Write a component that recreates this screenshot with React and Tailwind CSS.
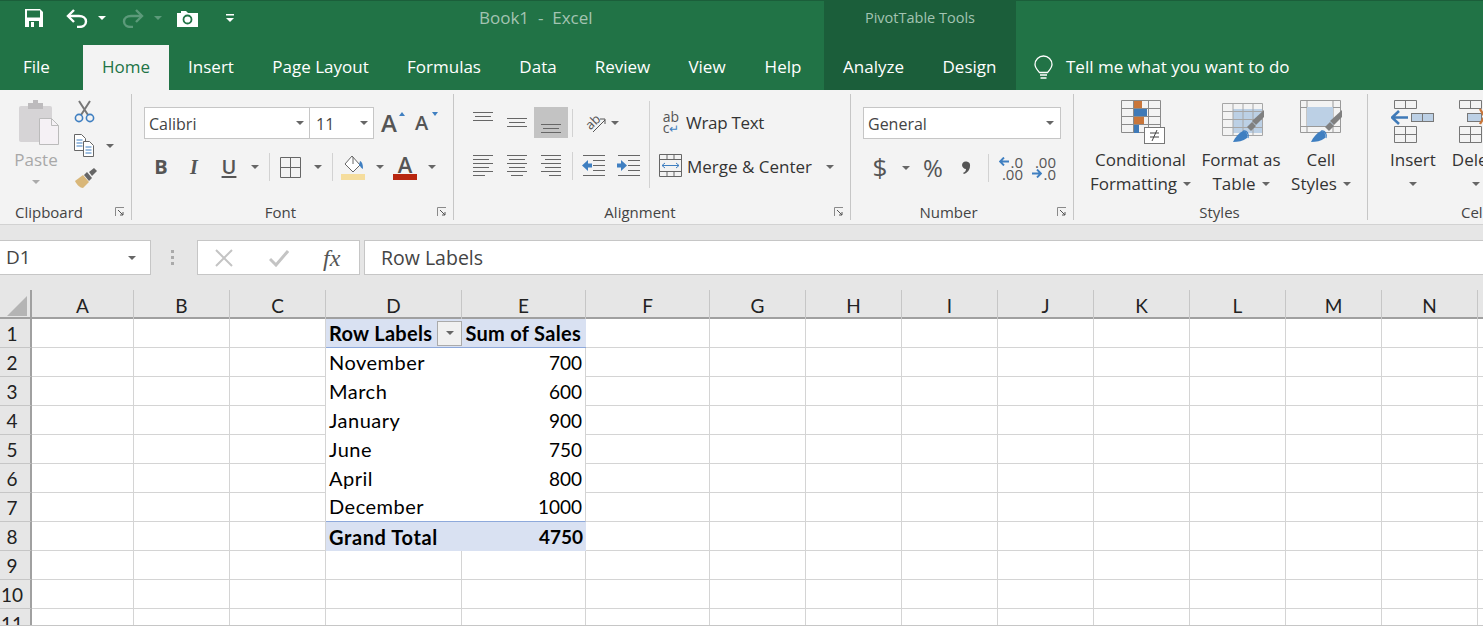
import React from 'react';

const ui = "font-['Open_Sans',sans-serif]";

const Caret = ({ className = '', color = '#666' }) => (
  <svg width="8" height="4" viewBox="0 0 8 4" className={className}>
    <path d="M0 0h8L4 4z" fill={color} />
  </svg>
);

const Sep = ({ className = '' }) => <div className={`w-px bg-[#d2d2d2] ${className}`} />;

const Launcher = () => (
  <svg width="10" height="10" viewBox="0 0 10 10">
    <path d="M.5 9V.5H9" fill="none" stroke="#8a8a8a" />
    <path d="M3 3l5 5M8 5v3H5" fill="none" stroke="#555" />
  </svg>
);

const Lines = ({ rows }) => (
  <svg width="20" height="22" viewBox="0 0 20 22">
    {rows.map(([x, y, w], i) => (
      <rect key={i} x={x} y={y} width={w} height="1" fill="#666" />
    ))}
  </svg>
);

const SaveIcon = () => (
  <svg width="20" height="20" viewBox="0 0 20 20">
    <path d="M1 1h15l3 3v15H1z" fill="#fff" />
    <rect x="3" y="2.500" width="13" height="7" fill="#217346" />
    <rect x="5" y="13" width="10" height="6" fill="#217346" />
    <rect x="7" y="14" width="3" height="5" fill="#fff" />
  </svg>
);

const UndoIcon = ({ color, flip }) => (
  <svg width="22" height="20" viewBox="0 0 22 20" style={flip ? { transform: 'scaleX(-1)' } : undefined}>
    <path d="M8 2L2 8l6 6" fill="none" stroke={color} strokeWidth="2.400" />
    <path d="M2 8h11c4 0 7 2 7 5.500S17 19 13 19h-2" fill="none" stroke={color} strokeWidth="2.400" />
  </svg>
);

const CameraIcon = () => (
  <svg width="23" height="17" viewBox="0 0 23 17">
    <path d="M1 3h4V1h5l2 2h10v14H1z" fill="#fff" />
    <circle cx="11.500" cy="9.500" r="4" fill="none" stroke="#217346" strokeWidth="1.800" />
  </svg>
);

const QuickAccess = () => (
  <svg width="8" height="9" viewBox="0 0 8 9">
    <rect y="0" width="8" height="1.500" fill="#fff" />
    <path d="M0 4h8L4 8z" fill="#fff" />
  </svg>
);

const Bulb = () => (
  <svg width="19" height="24" viewBox="0 0 19 24" fill="none" stroke="#fff" strokeWidth="1.300">
    <path d="M5.500 17.500C3 14.500 1 12.500 1 9.500a8.500 8.500 0 0 1 17 0c0 3-2 5-4.500 8z" />
    <path d="M6 20h7M6.500 23h6" />
  </svg>
);

const PasteIcon = () => (
  <svg width="42" height="46" viewBox="0 0 42 46">
    <rect x="1" y="6" width="33" height="36" rx="2" fill="#d6d4d6" />
    <rect x="10" y="3" width="15" height="6" fill="#bdbbbd" />
    <rect x="15" y="0" width="5" height="4" fill="#bdbbbd" />
    <path d="M21.500 18.500h12l7 7v19h-19z" fill="#f5f1f5" stroke="#bbb" />
    <path d="M33.500 18.500v7h7" fill="none" stroke="#bbb" />
  </svg>
);

const ScissorsIcon = () => (
  <svg width="21" height="23" viewBox="0 0 21 23">
    <path d="M5 1l9 14M16 1L7 15" stroke="#777" strokeWidth="2" fill="none" />
    <circle cx="5" cy="18" r="3.600" fill="none" stroke="#3f7fc1" strokeWidth="1.600" />
    <circle cx="16" cy="18" r="3.600" fill="none" stroke="#3f7fc1" strokeWidth="1.600" />
  </svg>
);

const CopyIcon = () => (
  <svg width="21" height="23" viewBox="0 0 21 23">
    <path d="M.5.500h7l4 4v12H.5z" fill="#fff" stroke="#666" />
    <path d="M2.500 6h6M2.500 9h6M2.500 12h6" stroke="#3f7fc1" />
    <path d="M9.500 7.500h6l4 4v11h-10z" fill="#fff" stroke="#666" />
    <path d="M11.500 13h6M11.500 16h6M11.500 19h6" stroke="#3f7fc1" />
  </svg>
);

const PainterIcon = () => (
  <svg width="24" height="21" viewBox="0 0 24 21">
    <path d="M1 13l8-6 6 7-6 6c-3 0-6-3-8-7z" fill="#d9b779" />
    <path d="M10 7l3-3 5 6-3 3z" fill="#666" />
    <path d="M15 4l5-4 3 3-5 5z" fill="#666" />
  </svg>
);

const BorderIcon = () => (
  <svg width="21" height="21" viewBox="0 0 21 21">
    <path d="M.5.500h20v20H.5zM10.500.500v20M.500 10.500h20" fill="none" stroke="#666" />
  </svg>
);

const FillIcon = () => (
  <svg width="24" height="25" viewBox="0 0 24 25">
    <path d="M11 1l8 9-7 7-8-8z" fill="#fff" stroke="#666" />
    <path d="M12 2v7" stroke="#666" />
    <path d="M19 6c3 1 3 6 3 8-2-1-2-2-4-4z" fill="#3f7fc1" />
    <rect y="19" width="24" height="6" fill="#f5dd9d" />
  </svg>
);

const OrientIcon = () => (
  <svg width="21" height="20" viewBox="0 0 21 20">
    <text x="0" y="14" fontSize="13" fontFamily="'Open Sans',sans-serif" fill="#555" transform="rotate(-45 7 9)">ab</text>
    <path d="M8 19L20 7M15 6h5v5" fill="none" stroke="#555" />
  </svg>
);

const IndentIcon = ({ right }) => (
  <svg width="23" height="21" viewBox="0 0 23 21">
    <path d="M1 .5h22M1 20.500h22M11 5.500h12M11 10.500h12M11 15.500h12" stroke="#666" />
    {right
      ? <path d="M0 8.500h4V5l6 5.500L4 16v-3.500H0z" fill="#3f7fc1" />
      : <path d="M10 8.500H6V5L0 10.500 6 16v-3.500h4z" fill="#3f7fc1" />}
  </svg>
);

const MergeIcon = () => (
  <svg width="23" height="23" viewBox="0 0 23 23">
    <path d="M.5.500h22v22H.5zM.500 5.500h22M.500 17.500h22M8 .500v5M15 .500v5M8 17.500v5M15 17.500v5" fill="none" stroke="#666" />
    <path d="M3 11.500h17M6 9l-3 2.500L6 14M17 9l3 2.500-3 2.500" fill="none" stroke="#3f7fc1" />
  </svg>
);

const SmallArrow = ({ right }) => (
  <svg width="10" height="9" viewBox="0 0 10 9" style={right ? { transform: 'scaleX(-1)' } : undefined}>
    <path d="M5 .5L1 4.500l4 4M1.500 4.500H10" fill="none" stroke="#3f7fc1" strokeWidth="1.900" />
  </svg>
);

const DecimalIcon = ({ more }) => (
  <div className="flex flex-col items-end text-[15px] leading-[12px] text-[#555]">
    {more ? (
      <>
        <div className="flex items-center gap-[1px]"><SmallArrow />.0</div>
        <div>.00</div>
      </>
    ) : (
      <>
        <div>.00</div>
        <div className="flex items-center gap-[1px]"><SmallArrow right />.0</div>
      </>
    )}
  </div>
);

const CommaIcon = () => (
  <svg width="10" height="14" viewBox="0 0 10 14">
    <path d="M1 4a4 4 0 1 1 8 1c0 4-3 7-6 8l-1-1c2-1 3-2 3-4-2 0-4-2-4-4z" fill="#555" />
  </svg>
);

const Brush = () => (
  <>
    <path d="M42 10v7L34 25l-4-4z" fill="#808080" />
    <path d="M30 22l-5 5 4 4 5-5z" fill="#808080" />
    <path d="M11 42c2-5 6-9 10-11 4 0 5 4 4 7-4 3-9 4-14 4z" fill="#3f7fc1" />
    <path d="M21 31c4-1 6 3 5 7" fill="none" stroke="#3f7fc1" strokeWidth="1.200" />
  </>
);

const CondIcon = () => (
  <svg width="44" height="44" viewBox="0 0 44 44">
    <path d="M.5.500h39v32H.5zM12.500.500v32M27.500.500v32M.500 8.500h39M.500 16.500h39M.500 24.500h39" fill="none" stroke="#8a8a8a" />
    <rect x="13" y="1" width="8" height="7" fill="#c9763a" />
    <rect x="13" y="9" width="13" height="7" fill="#3f7ab8" />
    <rect x="13" y="17" width="10" height="7" fill="#c9763a" />
    <rect x="13" y="25" width="5" height="8" fill="#3f7ab8" />
    <rect x="23.500" y="27.500" width="20" height="16" fill="#fff" stroke="#777" />
    <path d="M29 33h9M29 37h9M36 30l-5 11" stroke="#444" fill="none" />
  </svg>
);

const TableStyleIcon = () => (
  <svg width="44" height="46" viewBox="0 0 44 46">
    <rect x="11" y="9" width="29" height="24" fill="#bcd0e5" />
    <path d="M.5 3.500h40v32H.5zM.500 11.500h40M.500 19.500h40M.500 27.500h40M11 3.500v32M21 3.500v32M31 3.500v32" fill="none" stroke="#a6a6a6" />
    <Brush />
  </svg>
);

const CellStyleIcon = () => (
  <svg width="44" height="46" viewBox="0 0 44 46">
    <path d="M.5.500h40v32H.5zM.500 7.500h40M.500 26.500h40M7 .500v32M33 .500v32" fill="none" stroke="#999" />
    <rect x="7" y="7" width="26" height="19" fill="#bcd0e5" />
    <Brush />
  </svg>
);

const InsertIcon = () => (
  <svg width="44" height="44" viewBox="0 0 44 44">
    <path d="M3.500.500h22v8h-22zM14.500.500v8M3.500 26.500h22v16h-22zM3.500 34.500h22M14.500 26.500v16" fill="none" stroke="#777" />
    <rect x="20.500" y="13.500" width="22" height="8" fill="#bcd0e5" stroke="#777" />
    <path d="M31.500 13.500v8" stroke="#777" />
    <path d="M8 11l-7 6.500L8 24M1 17.500h16" fill="none" stroke="#3f7ab8" strokeWidth="2.600" />
  </svg>
);

const DeleteIcon = () => (
  <svg width="30" height="44" viewBox="0 0 30 44">
    <path d="M.5.500h22v8H.5zM11.500.500v8M.500 26.500h22v16H.5zM.500 34.500h22M11.500 26.500v16" fill="none" stroke="#777" />
    <rect x="8.500" y="13.500" width="14" height="8" fill="#bcd0e5" stroke="#777" />
    <path d="M21 9l9 15M30 9l-9 15" stroke="#c9763a" strokeWidth="2.400" />
  </svg>
);

const Group = ({ label, labelClass, launcher, width, children }) => (
  <div className={`${width} shrink-0 h-full flex flex-col border-r border-[#c6c6c6]`}>
    <div className="flex-1 min-h-0">{children}</div>
    <div className="grid grid-cols-[1fr_auto_1fr] items-center h-[20px] pt-[4px] pr-[6px] text-[15px] text-[#444]">
      <span />
      <span className={`leading-[16px] ${labelClass}`}>{label}</span>
      <span className="justify-self-end flex">{launcher && <Launcher />}</span>
    </div>
  </div>
);

const ClipboardGroup = () => (
  <div className="flex pl-[18px] pt-[6px]">
    <div className="w-[42px] flex flex-col items-center">
      <PasteIcon />
      <div className="text-[17px] leading-[20px] mt-[4px] mr-[6px] text-[#a8a8a8]">Paste</div>
      <Caret color="#aaa" className="mt-[10px] mr-[6px]" />
    </div>
    <div className="ml-[14px] flex flex-col gap-[11px]">
      <ScissorsIcon />
      <div className="flex items-center">
        <CopyIcon />
        <Caret className="ml-[11px]" />
      </div>
      <PainterIcon />
    </div>
  </div>
);

const FontGroup = () => (
  <div className="pl-[12px] pt-[13px]">
    <div className="flex items-center h-[32px]">
      <div className="w-[166px] h-[32px] bg-white border border-[#c6c6c6] flex items-center justify-between pl-[4px] pr-[5px] text-[#444] text-[16px]">
        <span className="pt-[2px]">Calibri</span>
        <Caret />
      </div>
      <div className="w-[64px] h-[32px] bg-white border border-l-0 border-[#c6c6c6] flex items-center justify-between pl-[6px] pr-[5px] text-[#444] text-[16px]">
        <span className="pt-[2px]">11</span>
        <Caret />
      </div>
      <div className="relative ml-[7px] w-[20px] text-[24px] leading-[24px] font-semibold text-[#555]">
        A
        <svg width="6" height="4" viewBox="0 0 6 4" className="absolute right-[-4px] top-[1px]"><path d="M0 4h6L3 0z" fill="#3f7fc1" /></svg>
      </div>
      <div className="relative ml-[14px] w-[20px] text-[20px] leading-[24px] font-semibold text-[#555]">
        A
        <svg width="6" height="4" viewBox="0 0 6 4" className="absolute right-[-3px] top-[1px]"><path d="M0 0h6L3 4z" fill="#3f7fc1" /></svg>
      </div>
    </div>
    <div className="flex items-center h-[30px] mt-[13px] text-[#555] text-[20px]">
      <span className="ml-[9px] w-[16px] text-center font-bold">B</span>
      <span className="ml-[17px] w-[16px] text-center italic font-semibold font-['Liberation_Serif',serif]">I</span>
      <span className="ml-[19px] w-[16px] text-center font-semibold underline underline-offset-2">U</span>
      <Caret className="ml-[14px]" />
      <Sep className="ml-[10px] h-[28px]" />
      <div className="ml-[10px] flex"><BorderIcon /></div>
      <Caret className="ml-[13px]" />
      <Sep className="ml-[10px] h-[28px]" />
      <div className="ml-[8px] flex"><FillIcon /></div>
      <Caret className="ml-[11px]" />
      <div className="ml-[9px] w-[24px] flex flex-col items-center">
        <span className="text-[22px] leading-[19px] font-semibold">A</span>
        <div className="w-[24px] h-[6px] bg-[#b8260f]" />
      </div>
      <Caret className="ml-[11px]" />
    </div>
  </div>
);

const Btn = ({ active, children }) => (
  <div className={`w-[34px] h-[31px] flex items-center justify-center ${active ? 'bg-[#c3c3c3]' : ''}`}>{children}</div>
);

const AlignmentGroup = () => (
  <div className="flex pl-[12px] pt-[13px]">
    <div className="w-[183px]">
      <div className="flex items-center h-[31px]">
        <Btn><Lines rows={[[0, 0, 20], [2, 4, 16], [0, 8, 20]]} /></Btn>
        <Btn><Lines rows={[[0, 6, 20], [2, 10, 16], [0, 14, 20]]} /></Btn>
        <Btn active><Lines rows={[[0, 12, 20], [2, 16, 16], [0, 20, 20]]} /></Btn>
        <Sep className="ml-[4px] h-[28px]" />
        <div className="ml-[12px] flex"><OrientIcon /></div>
        <Caret className="ml-[5px]" />
      </div>
      <div className="flex items-center h-[31px] mt-[12px]">
        <Btn><Lines rows={[[0, 0, 20], [0, 4, 16], [0, 8, 20], [0, 12, 16], [0, 16, 20], [0, 20, 12]]} /></Btn>
        <Btn><Lines rows={[[0, 0, 20], [2, 4, 16], [0, 8, 20], [2, 12, 16], [0, 16, 20], [4, 20, 12]]} /></Btn>
        <Btn><Lines rows={[[0, 0, 20], [4, 4, 16], [0, 8, 20], [4, 12, 16], [0, 16, 20], [8, 20, 12]]} /></Btn>
        <Sep className="ml-[4px] h-[28px]" />
        <div className="ml-[9px] flex"><IndentIcon /></div>
        <div className="ml-[12px] flex"><IndentIcon right /></div>
      </div>
    </div>
    <Sep className="h-[87px] -mt-[6px]" />
    <div className="pl-[9px] text-[17px] text-[#333]">
      <div className="flex items-center h-[31px] pl-[3px]">
        <div className="w-[18px] text-[#555] text-[14px] leading-[11px] text-center">ab<br />c<span className="text-[#3f7fc1] text-[12px]">↵</span></div>
        <span className="ml-[6px] tracking-[-0.3px]">Wrap Text</span>
      </div>
      <div className="flex items-center h-[31px] mt-[13px]">
        <div className="flex -mt-[3px]"><MergeIcon /></div>
        <span className="ml-[5px]">Merge &amp; Center</span>
        <Caret className="ml-[14px]" />
      </div>
    </div>
  </div>
);

const NumberGroup = () => (
  <div className="pl-[12px] pt-[13px]">
    <div className="w-[198px] h-[32px] bg-white border border-[#c6c6c6] flex items-center justify-between pl-[4px] pr-[6px] text-[16px] text-[#444]">
      <span className="pt-[2px]">General</span>
      <Caret />
    </div>
    <div className="flex items-center h-[31px] mt-[13px] text-[#555]">
      <span className="ml-[9px] w-[16px] text-center text-[26px]">$</span>
      <Caret className="ml-[14px]" />
      <span className="ml-[11px] w-[24px] text-center text-[24px]">%</span>
      <div className="ml-[15px] w-[12px] flex justify-center"><CommaIcon /></div>
      <Sep className="ml-[16px] h-[28px]" />
      <div className="ml-[10px] w-[24px]"><DecimalIcon more /></div>
      <div className="ml-[9px] w-[24px]"><DecimalIcon /></div>
    </div>
  </div>
);

const BigBtn = ({ icon, iconClass, lines, width }) => (
  <div className={`${width} flex flex-col items-center text-[17px] leading-[24px] text-[#333]`}>
    <div className={`h-[54px] pt-[6px] flex ${iconClass}`}>{icon}</div>
    {lines.map((l, i) => (
      <div key={i} className="flex items-center whitespace-nowrap">
        {l}
        {i === lines.length - 1 && <Caret className="ml-[6px]" />}
      </div>
    ))}
  </div>
);

const StylesGroup = () => (
  <div className="flex pl-[10px]">
    <BigBtn width="w-[113px]" iconClass="ml-[5px]" icon={<CondIcon />} lines={['Conditional', 'Formatting']} />
    <BigBtn width="w-[88px]" iconClass="ml-[5px]" icon={<TableStyleIcon />} lines={['Format as', 'Table']} />
    <BigBtn width="w-[72px]" iconClass="ml-[1px]" icon={<CellStyleIcon />} lines={['Cell', 'Styles']} />
  </div>
);

const CellsGroup = () => (
  <div className="flex pl-[22px] text-[17px] leading-[24px] text-[#333]">
    <div className="w-[46px] flex flex-col items-center">
      <div className="h-[54px] pt-[6px] flex"><InsertIcon /></div>
      <div>Insert</div>
      <Caret className="mt-[10px]" />
    </div>
    <div className="ml-[16px] w-[48px] flex flex-col items-start">
      <div className="h-[54px] pt-[6px] pl-[7px] flex"><DeleteIcon /></div>
      <div>Delete</div>
      <Caret className="mt-[10px] ml-[20px]" />
    </div>
  </div>
);

const tabs = [
  ['File', 'w-[73px] pl-[23px]'],
  ['Home', 'w-[86px] text-center bg-[#f3f3f3] text-[#217346] ml-[10px]'],
  ['Insert', 'w-[84px] text-center'],
  ['Page Layout', 'w-[135px] text-center'],
  ['Formulas', 'w-[112px] text-center'],
  ['Data', 'w-[76px] text-center'],
  ['Review', 'w-[93px] text-center'],
  ['View', 'w-[76px] text-center'],
  ['Help', 'w-[79px] text-center pr-[3px]'],
];

const columns = ['A', 'B', 'C', 'D', 'E', 'F', 'G', 'H', 'I', 'J', 'K', 'L', 'M', 'N', ''];
const gridCols = 'grid grid-cols-[32px_102px_96px_96px_136px_124px_124px_96px_96px_96px_96px_96px_96px_96px_96px_6px] auto-rows-[29px]';

const pivot = {
  1: ['Row Labels', 'Sum of Sales'],
  2: ['November', '700'],
  3: ['March', '600'],
  4: ['January', '900'],
  5: ['June', '750'],
  6: ['April', '800'],
  7: ['December', '1000'],
  8: ['Grand Total', '4750'],
};

const labelFont = "font-['Lato',sans-serif] text-[20px] leading-[24px]";

const PivotCells = ({ n }) => {
  const data = pivot[n];
  const head = n === 1 || n === 8;
  const tone = head ? 'bg-[#d9e1f2] font-bold tracking-[0.3px]' : 'tracking-[0.5px]';
  const bottom = n === 1 || n === 7 ? 'border-b border-[#8ea9db]' : '';
  return (
    <>
      <div className={`flex items-center pl-[3px] text-black ${labelFont} ${tone} ${bottom} ${n === 1 ? 'justify-between' : ''} ${head ? '' : 'pb-[2px]'}`}>
        <span className={n === 8 ? 'tracking-[0.6px]' : ''}>{data[0]}</span>
        {n === 1 && (
          <div className="w-[25px] h-[25px] bg-[#f0f0f0] border border-[#aaaaaa] flex items-center justify-center">
            <Caret />
          </div>
        )}
      </div>
      <div className={`flex items-center justify-end text-black ${labelFont} ${tone} ${bottom} ${n === 1 ? 'pr-[5px]' : 'pr-[3px]'} ${head ? '' : 'border-r border-r-[#d4d4d4]'}`}>
        {n === 1 ? data[1] : <span className={head ? 'text-[19px] tracking-normal' : 'text-[19px] tracking-normal'}>{data[1]}</span>}
      </div>
    </>
  );
};

const SheetRow = ({ n }) => {
  const before = ['', '', ''];
  const after = ['', '', '', '', '', '', '', '', '', '', ''];
  return (
    <div className={`${gridCols} h-[29px] shrink-0`}>
      <div className="bg-[#e6e6e6] border-r-2 border-b border-r-[#a0a0a0] border-b-[#c6c6c6] flex items-center justify-center pr-[6px] pt-[2px] text-[19px] leading-[24px] text-[#222] font-['Lato',sans-serif]">{n}</div>
      {before.map((_, i) => (
        <div key={i} className="border-r border-b border-[#d4d4d4]" />
      ))}
      {pivot[n] ? (
        <PivotCells n={n} />
      ) : (
        <>
          <div className="border-r border-b border-[#d4d4d4]" />
          <div className="border-r border-b border-[#d4d4d4]" />
        </>
      )}
      {after.map((_, i) => (
        <div key={i} className="border-r border-b border-[#d4d4d4]" />
      ))}
    </div>
  );
};

const App = () => {
  return (
    <div className={`w-[1483px] h-[626px] overflow-hidden flex flex-col bg-white border-b border-[#c6c6c6] ${ui}`}>
      <div className="h-[90px] shrink-0 bg-[#217346] border-t border-[#1b5e3a] flex text-white overflow-hidden">
        <div className="w-[824px] shrink-0 flex flex-col">
          <div className="h-[44px] flex items-center pl-[24px] pb-[10px]">
            <SaveIcon />
            <div className="ml-[22px] flex"><UndoIcon color="#fff" /></div>
            <Caret color="#fff" className="ml-[10px]" />
            <div className="ml-[16px] flex"><UndoIcon color="#5c9a7a" flip /></div>
            <Caret color="#5c9a7a" className="ml-[10px]" />
            <div className="ml-[14px] flex"><CameraIcon /></div>
            <div className="ml-[27px] flex"><QuickAccess /></div>
            <span className="ml-[245px] text-[17px] text-[#a3c4b2] whitespace-pre">Book1  -  Excel</span>
          </div>
          <div className="h-[45px] flex text-[17px] leading-[43px]">
            {tabs.map(([name, cls]) => (
              <div key={name} className={cls}>{name}</div>
            ))}
          </div>
        </div>
        <div className="w-[192px] shrink-0 bg-[#1b5e3a] flex flex-col">
          <div className="h-[44px] pb-[10px] flex items-center justify-center text-[14.500px] text-[#a3c4b2]">PivotTable Tools</div>
          <div className="h-[45px] flex text-[17px] leading-[43px]">
            <div className="w-[99px] text-center">Analyze</div>
            <div className="w-[93px] text-center">Design</div>
          </div>
        </div>
        <div className="flex-1 flex flex-col">
          <div className="h-[44px]" />
          <div className="h-[45px] flex items-center pl-[18px] pb-[1px] text-[17px]">
            <Bulb />
            <span className="ml-[13px]">Tell me what you want to do</span>
          </div>
        </div>
      </div>

      <div className="h-[135px] shrink-0 bg-[#f3f3f3] border-b border-[#d2d2d2] flex py-[4px] overflow-hidden">
        <Group label="Clipboard" labelClass="pr-[27px]" launcher width="w-[132px]"><ClipboardGroup /></Group>
        <Group label="Font" labelClass="pr-[18px]" launcher width="w-[322px]"><FontGroup /></Group>
        <Group label="Alignment" labelClass="pr-[18px]" launcher width="w-[397px]"><AlignmentGroup /></Group>
        <Group label="Number" labelClass="pr-[21px]" launcher width="w-[223px]"><NumberGroup /></Group>
        <Group label="Styles" labelClass="pl-[4px]" width="w-[294px]"><StylesGroup /></Group>
        <div className="w-[115px] shrink-0 h-full flex flex-col">
          <div className="flex-1"><CellsGroup /></div>
          <div className="h-[20px] pt-[4px] text-[15px] leading-[16px] text-[#444] pl-[93px]">Cells</div>
        </div>
      </div>

      <div className="h-[65px] shrink-0 bg-[#e6e6e6] pt-[15px] flex text-[19px] text-[#444]">
        <div className="w-[151px] h-[35px] bg-white border border-[#c6c6c6] border-l-0 flex items-center justify-between pl-[6px] pr-[14px]">
          <span>D1</span>
          <Caret />
        </div>
        <div className="w-[46px] h-[35px] pr-[4px] flex flex-col items-center justify-center gap-[3px]">
          <div className="w-[3px] h-[3px] bg-[#aaa]" />
          <div className="w-[3px] h-[3px] bg-[#aaa]" />
          <div className="w-[3px] h-[3px] bg-[#aaa]" />
        </div>
        <div className="w-[163px] h-[35px] bg-white border border-[#c6c6c6] flex items-center">
          <svg width="18" height="18" viewBox="0 0 18 18" className="ml-[17px]"><path d="M1 1l16 16M17 1L1 17" stroke="#c4c4c4" strokeWidth="2" /></svg>
          <svg width="20" height="18" viewBox="0 0 20 18" className="ml-[36px]"><path d="M1 10l6 6L19 2" stroke="#c4c4c4" strokeWidth="3" fill="none" /></svg>
          <span className="ml-[34px] text-[#555] italic font-['Liberation_Serif',serif] text-[24px]">fx</span>
        </div>
        <div className="ml-[4px] flex-1 h-[35px] bg-white border border-r-0 border-[#c6c6c6] flex items-center pl-[16px] text-[19.500px]">Row Labels</div>
      </div>

      <div className={`${gridCols} h-[29px] shrink-0 bg-[#e6e6e6] border-b-2 border-[#a0a0a0]`}>
        <div className="flex items-end justify-end pr-[3px] pb-[3px] border-r-2 border-[#a0a0a0]">
          <svg width="20" height="20" viewBox="0 0 20 20"><path d="M20 0v20H0z" fill="#b4b4b4" /></svg>
        </div>
        {columns.map((c, i) => (
          <div key={i} className={`flex items-center justify-center pt-[2px] text-[19px] leading-[24px] text-[#222] border-r border-[#c6c6c6] font-['Lato',sans-serif] ${i === columns.length - 1 ? 'border-r-0' : ''}`}>{c}</div>
        ))}
      </div>

      {[1, 2, 3, 4, 5, 6, 7, 8, 9, 10, 11].map((n) => (
        <SheetRow key={n} n={n} />
      ))}
    </div>
  );
};

export default App;
